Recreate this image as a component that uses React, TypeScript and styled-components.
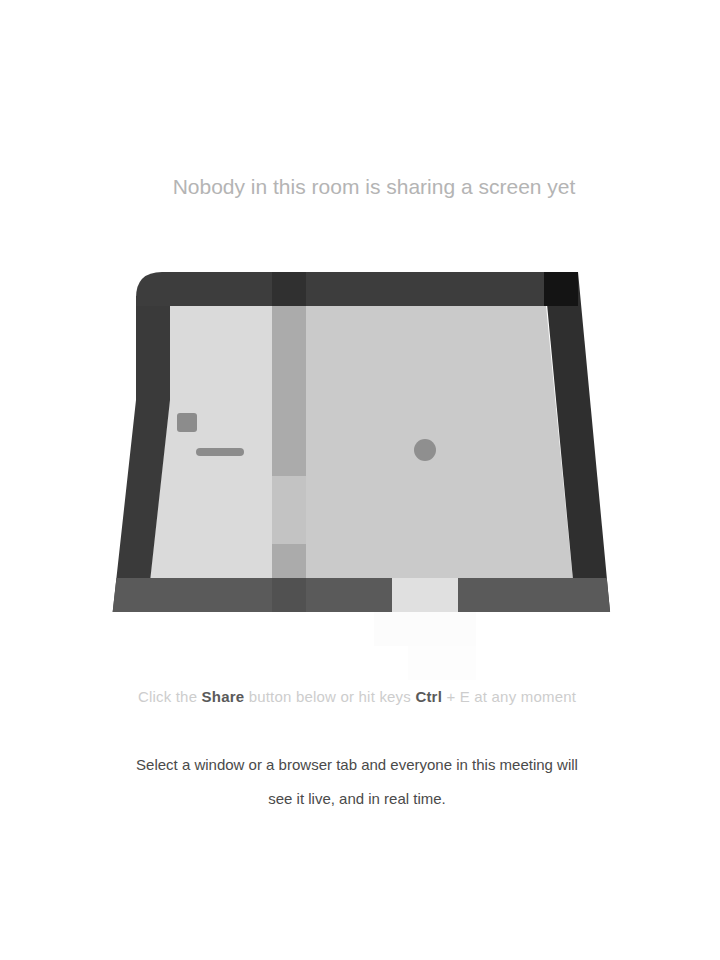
import React from "react";
import styled, { createGlobalStyle } from "styled-components";

const Global = createGlobalStyle`
  html, body { margin: 0; padding: 0; background: #ffffff; }
  body { font-family: "Liberation Sans", Arial, sans-serif; }
`;

const Page = styled.main`
  width: 720px;
  min-height: 960px;
  display: flex;
  flex-direction: column;
  align-items: center;
  padding-top: 170px;
  box-sizing: border-box;
`;

const Heading = styled.h1`
  margin: 0 0 0 28px;
  font-size: 21px;
  line-height: 34px;
  font-weight: 400;
  color: #b4b4b4;
  white-space: nowrap;
`;

const Illustration = styled.svg`
  display: block;
  margin-top: 68px;
  width: 520px;
  height: 408px;
`;

const Caption = styled.p`
  margin: 0 0 0 -6px;
  font-size: 15px;
  line-height: 34px;
  color: #cdcdcd;
  white-space: nowrap;
  letter-spacing: 0.2px;
`;

const Strong = styled.span`
  color: #5a5a5a;
  font-weight: 700;
`;

const Paragraph = styled.p`
  margin: 34px 0 0 -6px;
  width: 450px;
  font-size: 15px;
  line-height: 34px;
  color: #4a4a4a;
  text-align: center;
`;

const leftOuter = (y: number) => (y <= 400 ? 136 : 136 - (y - 400) * 0.11);
const rightInner = (y: number) => 544 + (y - 285) * 0.098;

function MonitorDrawing() {
  const lo578 = leftOuter(578);
  const lo612 = leftOuter(612);
  const ri306 = rightInner(306);
  const ri578 = rightInner(578);
  const ri612 = rightInner(612);
  return (
    <Illustration viewBox="100 272 520 408" aria-hidden="true">
      {/* faint stand */}
      <rect x={374} y={612} width={102} height={34} fill="#fcfcfc" />
      <rect x={408} y={646} width={68} height={34} fill="#fdfdfd" />

      {/* screen main area */}
      <polygon
        points={`170,306 ${ri306},306 ${ri578},578 ${lo578 + 34},578 170,400`}
        fill="#cacaca"
      />
      {/* sidebar */}
      <polygon
        points={`170,306 272,306 272,578 ${lo578 + 34},578 170,400`}
        fill="#dadada"
      />
      {/* sidebar divider */}
      <rect x={272} y={306} width={34} height={170} fill="#ababab" />
      <rect x={272} y={476} width={34} height={68} fill="#c3c3c3" />
      <rect x={272} y={544} width={34} height={34} fill="#ababab" />

      {/* sidebar items */}
      <rect x={177} y={413} width={20} height={19} rx={3} fill="#8c8c8c" />
      <rect x={196} y={448} width={48} height={8} rx={4} fill="#8c8c8c" />

      {/* centre icon */}
      <circle cx={425} cy={450} r={11} fill="#8f8f8f" />

      {/* left bezel */}
      <polygon
        points={`136,296 170,296 170,400 ${lo612 + 34},612 ${lo612},612 136,400`}
        fill="#3a3a3a"
      />
      {/* right bezel */}
      <polygon
        points={`544,272 578,272 ${ri612 + 34},612 ${ri612},612`}
        fill="#2f2f2f"
      />
      {/* top bezel */}
      <path d="M162,272 H578 V306 H136 V298 Q136,272 162,272 Z" fill="#3d3d3d" />
      <rect x={272} y={272} width={34} height={34} fill="#303030" />
      <rect x={544} y={272} width={34} height={34} fill="#141414" />

      {/* bottom bezel */}
      <polygon
        points={`${lo578},578 ${ri578 + 34},578 ${ri612 + 34},612 ${lo612},612`}
        fill="#5a5a5a"
      />
      <rect x={272} y={578} width={34} height={34} fill="#515151" />
      <rect x={392} y={578} width={66} height={34} fill="#e0e0e0" />
    </Illustration>
  );
}

export default function App() {
  return (
    <>
      <Global />
      <Page>
        <Heading>Nobody in this room is sharing a screen yet</Heading>
        <MonitorDrawing />
        <Caption>
          Click the <Strong>Share</Strong> button below or hit keys <Strong>Ctrl</Strong> + E at any moment
        </Caption>
        <Paragraph>
          Select a window or a browser tab and everyone in this meeting will see it live, and in real time.
        </Paragraph>
      </Page>
    </>
  );
}
